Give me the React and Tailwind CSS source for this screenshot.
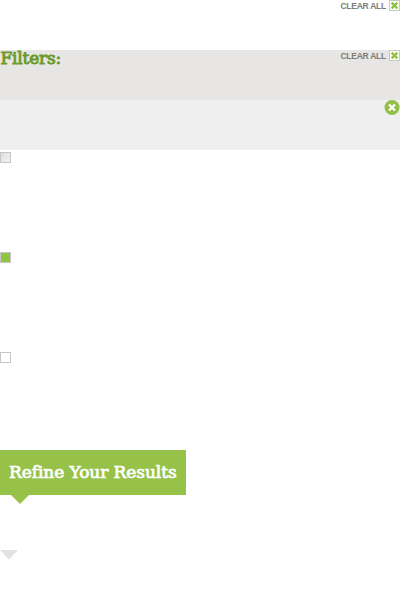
function ClearAll() {
  return (
    <div className="flex h-[12px] items-start gap-[3px]">
      <span className="pt-px text-[8.5px] leading-[11px] font-bold tracking-[-0.25px] whitespace-nowrap text-[#7c7c78]">CLEAR ALL</span>
      <svg width="11" height="11" viewBox="0 0 11 11">
        <rect x="0.5" y="0.5" width="10" height="10" fill="#fff" stroke="#c5c9be" />
        <path d="M2.6 2.6L8.4 8.4M8.4 2.6L2.6 8.4" stroke="#8dc33b" strokeWidth="2.2" />
      </svg>
    </div>
  );
}

export default function App() {
  return (
    <main className="flex h-[600px] w-[400px] flex-col overflow-hidden bg-white font-['Liberation_Sans',Arial,sans-serif]">
      <header className="flex h-[50px] justify-end">
        <ClearAll />
      </header>
      <section className="flex h-[50px] items-start justify-between bg-[#e8e6e4]">
        <h2 className="h-[18px] pl-[0.5px] font-['DejaVu_Serif',serif] text-[17px] leading-[16px] tracking-[-0.2px] whitespace-nowrap text-[#6a9a2b] [-webkit-text-stroke:0.9px_#6a9a2b]">
          Filters:
        </h2>
        <ClearAll />
      </section>
      <section className="flex h-[50px] justify-end bg-[#efefef]">
        <svg width="16" height="16" viewBox="0 0 16 16">
          <circle cx="8" cy="7.5" r="7.5" fill="#93c147" />
          <path d="M5 4.5L11 10.5M11 4.5L5 10.5" stroke="#fff" strokeWidth="2.4" />
        </svg>
      </section>
      <div className="h-[100px] pt-[2px]">
        <div className="size-[11px] border border-[#c6c6c6] bg-linear-to-br from-[#dddddd] to-[#f3f3f3]" />
      </div>
      <div className="h-[100px] pt-[2px]">
        <div className="size-[11px] border border-[#c6c6c6] bg-[#91c344]" />
      </div>
      <div className="h-[100px] pt-[2px]">
        <div className="size-[11px] border border-[#c6c6c6] bg-white" />
      </div>
      <section className="h-[100px]">
        <div className="h-[45px] w-[186px] bg-[#96c24a] pl-[9px]">
          <h1 className="font-['DejaVu_Serif',serif] text-[17px] leading-[44px] tracking-[-0.07px] whitespace-nowrap text-white [-webkit-text-stroke:0.7px_white]">
            Refine Your Results
          </h1>
        </div>
        <svg className="ml-[11px]" width="18" height="9" viewBox="0 0 18 9">
          <path d="M0 0H18L9 9Z" fill="#96c24a" />
        </svg>
      </section>
      <svg width="18" height="10" viewBox="0 0 18 10">
        <path d="M0 0H18L9 9.5Z" fill="#e2e2e2" />
      </svg>
    </main>
  );
}
